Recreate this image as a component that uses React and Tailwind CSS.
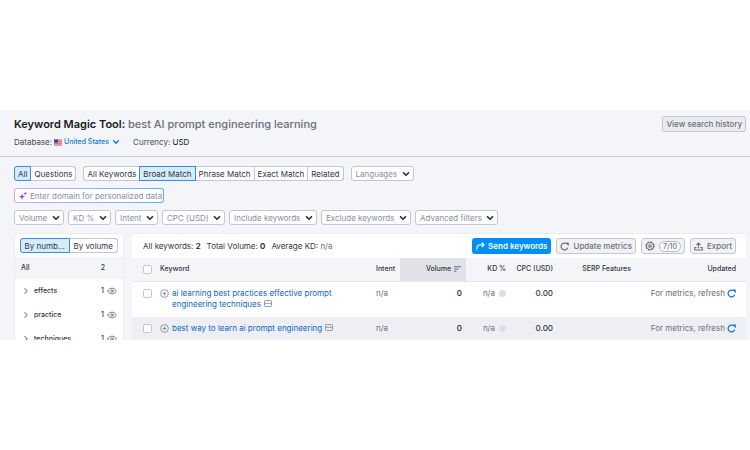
import React, { useState } from 'react';
import { ChevronDown, ChevronRight, Eye } from 'lucide-react';
import clsx from 'clsx';

const scopeTabs = ['All', 'Questions'];
const matchTabs = ['All Keywords', 'Broad Match', 'Phrase Match', 'Exact Match', 'Related'];
const filters = ['Volume', 'KD %', 'Intent', 'CPC (USD)', 'Include keywords', 'Exclude keywords', 'Advanced filters'];

const groups = [
  { name: 'effects', count: 1 },
  { name: 'practice', count: 1 },
  { name: 'techniques', count: 1 },
];

const keywords = [
  { id: 1, text: 'ai learning best practices effective prompt engineering techniques', intent: 'n/a', volume: 0, kd: 'n/a', cpc: '0.00' },
  { id: 2, text: 'best way to learn ai prompt engineering', intent: 'n/a', volume: 0, kd: 'n/a', cpc: '0.00' },
];

const RefreshIcon = ({ className }) => (
  <svg viewBox="0 0 16 16" className={className} fill="none" stroke="currentColor" strokeWidth="2.2" aria-hidden="true">
    <path d="M10.5 2.6A6 6 0 1 0 13.6 10" />
    <path d="M9 1h6.500v6.500z" fill="currentColor" stroke="none" />
  </svg>
);

const SendIcon = () => (
  <svg viewBox="0 0 18 16" className="w-[9px] h-2" fill="none" stroke="currentColor" strokeWidth="2.200" strokeLinecap="round" strokeLinejoin="round" aria-hidden="true">
    <path d="M1.5 14.5c0-6 2.5-9 8-9h6.5M12 1.5l4 4-4 4" />
  </svg>
);

const GearIcon = () => (
  <svg viewBox="0 0 20 20" className="w-[10px] h-[10px]" fill="none" stroke="currentColor" strokeWidth="2.2" aria-hidden="true">
    <circle cx="10" cy="10" r="7" />
    <circle cx="10" cy="10" r="2.6" />
    <circle cx="10" cy="10" r="8.6" strokeWidth="1.8" strokeDasharray="3.4 3.35" />
  </svg>
);

const ExportIcon = () => (
  <svg viewBox="0 0 18 18" className="w-[9px] h-[9px]" fill="none" stroke="currentColor" strokeWidth="2.2" strokeLinecap="round" strokeLinejoin="round" aria-hidden="true">
    <path d="M9 12V2M5.5 5.5L9 2l3.500 3.500M4.500 11H1.500v5h15v-5h-3" />
  </svg>
);

const SparkleIcon = () => (
  <svg viewBox="0 0 16 16" className="w-2 h-2 shrink-0" fill="#8f3df5" aria-hidden="true">
    <path d="M6 4.500c.5 3.200 1.300 4 4.800 4.800-3.500.8-4.300 1.600-4.800 5.200-.5-3.600-1.300-4.400-5-5.200 3.700-.8 4.500-1.600 5-4.800z" stroke="#8f3df5" />
    <path d="M12.500 0c.3 2 1 2.600 3 3-2 .4-2.700 1-3 3-.3-2-1-2.600-3-3 2-.4 2.700-1 3-3z" stroke="#8f3df5" strokeWidth=".6" />
  </svg>
);

const SortIcon = () => (
  <svg viewBox="0 0 14 12" className="w-[7px] h-[6px]" stroke="#6c6e79" strokeWidth="2" aria-hidden="true">
    <path d="M0 1.500h14M0 6h9M0 10.500h5" />
  </svg>
);

const SerpIcon = () => (
  <svg viewBox="0 0 16 14" className="inline w-2 h-[7px] ml-[3px] align-baseline" fill="none" stroke="#8a8e9b" strokeWidth="1.800" aria-hidden="true">
    <rect x="1" y="1" width="14" height="12" rx="1.500" />
    <path d="M1 6.500h14" />
  </svg>
);

const PlusCircleIcon = () => (
  <svg viewBox="0 0 18 18" className="w-[9px] h-[9px]" fill="none" stroke="#8a8e9b" strokeWidth="1.800" aria-hidden="true">
    <circle cx="9" cy="9" r="7.800" />
    <path d="M9 5v8M5 9h8" />
  </svg>
);

const FlagIcon = () => (
  <svg viewBox="0 0 16 12" className="w-2 h-[7px]" aria-hidden="true">
    <path d="M0 0h16v12H0z" fill="#f6d6da" />
    <path d="M0 1h16M0 4.300h16M0 7.600h16M0 11h16" stroke="#e2495b" strokeWidth="1.800" />
    <path d="M0 0h8v6.500H0z" fill="#3c4f9f" />
  </svg>
);

const Segments = ({ items, value, onChange, label, wide }) => (
  <div role="group" aria-label={label} className="flex h-[15px] rounded-[3px] bg-white border border-[#c4c7cf]">
    {items.map((item) => (
      <button
        key={item}
        type="button"
        aria-pressed={item === value}
        onClick={() => onChange(item)}
        className={clsx(
          '-my-px -mr-px px-[3px] border text-center whitespace-nowrap first:-ml-px first:rounded-l-[3px] last:rounded-r-[3px]',
          wide && 'flex-1',
          item === value ? 'relative bg-[#d4ecfb] border-[#3b8ce0]' : 'border-[#c4c7cf]'
        )}
      >
        {item}
      </button>
    ))}
  </div>
);

const FilterSelect = ({ label }) => (
  <div className="relative h-[15px]">
    <select
      aria-label={label}
      className="appearance-none block h-full pl-1 pr-[15px] bg-white border border-[#c4c7cf] rounded-[3px] text-[#8a8e9b]"
    >
      <option>{label}</option>
    </select>
    <ChevronDown size={10} strokeWidth={4} className="absolute right-[3px] top-[3px] text-[#2b2e38] pointer-events-none" />
  </div>
);

const ToolButton = ({ children, label }) => (
  <button
    type="button"
    aria-label={label}
    className="flex items-center gap-1 h-4 px-[3px] rounded-[3px] border border-[#c4c7cf] bg-[#f1f2f5] text-[#6c6e79] font-medium whitespace-nowrap"
  >
    {children}
  </button>
);

const Header = () => (
  <header className="border-b border-[#c9ccd6] pl-[14px] pr-1 pt-[6px] pb-2">
    <div className="flex items-center justify-between">
      <h1 className="text-[11px] leading-4 font-semibold text-[#191b23]">
        Keyword Magic Tool: <span className="font-medium text-[#6c6e79]">best AI prompt engineering learning</span>
      </h1>
      <button type="button" className="h-4 px-[3px] rounded-[3px] border border-[#c4c7cf] bg-[#e9ebf0] font-medium text-[#6c6e79]">
        View search history
      </button>
    </div>
    <div className="flex items-center mt-1 leading-3">
      <label htmlFor="database" className="mr-[2px] text-[#484a54]">Database:</label>
      <FlagIcon />
      <div className="relative ml-[2px]">
        <select id="database" className="appearance-none block pr-3 text-[7px] font-medium text-[#1275d1]">
          <option>United States</option>
        </select>
        <ChevronDown size={10} strokeWidth={3} className="absolute right-0 top-px text-[#1275d1] pointer-events-none" />
      </div>
      <p className="ml-3 text-[#484a54]">Currency: <span className="text-[#191b23]">USD</span></p>
    </div>
  </header>
);

const Sidebar = () => {
  const [mode, setMode] = useState('By numb...');

  return (
    <aside className="w-[110px] shrink-0 bg-white rounded-t-[4px] border border-[#eceef3]">
      <div className="px-[5px] pt-1 pb-1">
        <Segments items={['By numb...', 'By volume']} value={mode} onChange={setMode} label="Group by" wide />
      </div>
      <div className="flex justify-between h-[22px] items-center pl-[6px] pr-[18px] bg-[#f4f5f9] text-[7px] font-medium">
        <span>All</span>
        <span>2</span>
      </div>
      <ul>
        {groups.map((group) => (
          <li key={group.name} className="flex items-center h-6 pl-[6px] pr-[6px] text-[7px] font-medium">
            <ChevronRight size={10} strokeWidth={2.5} className="mr-[3px] text-[#6c6e79]" />
            <span className="flex-1">{group.name}</span>
            <span className="mr-[3px]">{group.count}</span>
            <Eye size={10} className="text-[#6c6e79]" />
          </li>
        ))}
      </ul>
    </aside>
  );
};

const KeywordTable = () => (
  <table className="w-full table-fixed border-collapse">
    <thead>
      <tr className="h-[23px] bg-[#f4f5f9] border-b border-[#e3e5ec] text-[7px] text-[#33353f]">
        <th className="w-7 pl-[11px] text-left">
          <input type="checkbox" aria-label="Select all keywords" className="block appearance-none w-[9px] h-[9px] bg-white border border-[#c4c7cf] rounded-[2px]" />
        </th>
        <th className="text-left font-medium">Keyword</th>
        <th className="w-[29px] pl-[5px] text-left font-medium">Intent</th>
        <th className="w-[66px] pr-[5px] bg-[#e0e1e9] font-medium">
          <span className="flex items-center justify-end gap-[3px]">Volume <SortIcon /></span>
        </th>
        <th className="w-10 text-right font-medium">KD %</th>
        <th className="w-[47px] text-right font-medium">CPC (USD)</th>
        <th className="w-[78px] text-right font-medium">SERP Features</th>
        <th className="w-[115px] pr-[10px] text-right font-medium">Updated</th>
      </tr>
    </thead>
    <tbody>
      {keywords.map((row) => (
        <tr key={row.id} className="align-top leading-[11px] text-[#6c6e79] even:bg-[#eeeff4]">
          <td className="pl-[11px] py-[7px]">
            <input type="checkbox" aria-label={`Select ${row.text}`} className="block appearance-none w-[9px] h-[9px] bg-white border border-[#c4c7cf] rounded-[2px]" />
          </td>
          <td className="pt-[6px] pb-[7px] pr-8">
            <div className="flex gap-[3px]">
              <button type="button" aria-label="Add to list" className="h-[11px] shrink-0">
                <PlusCircleIcon />
              </button>
              <p>
                <a href="#keyword" className="text-[#0f66c0]">{row.text}</a>
                <SerpIcon />
              </p>
            </div>
          </td>
          <td className="py-[6px] pl-[5px]">{row.intent}</td>
          <td className="py-[6px] pr-1 text-right font-medium text-[#191b23]">{row.volume}</td>
          <td className="py-[6px]">
            <span className="flex items-center justify-end gap-1">
              {row.kd}
              <span className="w-[7px] h-[7px] rounded-full bg-[#dddfe6]" />
            </span>
          </td>
          <td className="py-[6px] text-right font-medium text-[#33353f]">{row.cpc}</td>
          <td />
          <td className="py-[6px] pr-[10px]">
            <button type="button" className="flex items-center gap-[2px] ml-auto whitespace-nowrap">
              For metrics, refresh
              <RefreshIcon className="w-[9px] h-[9px] text-[#1275d1]" />
            </button>
          </td>
        </tr>
      ))}
    </tbody>
  </table>
);

export default function App() {
  const [scope, setScope] = useState('All');
  const [match, setMatch] = useState('Broad Match');

  return (
    <div className="h-screen py-[110px] bg-white">
      <main className="h-full overflow-hidden bg-[#f4f5f9] font-[Inter,sans-serif] text-[8px] leading-3 text-[#33353f]">
        <Header />

        <div className="pl-[14px] pr-1 pt-[9px]">
          <div className="flex flex-col items-start gap-[7px]">
            <div className="flex gap-[7px]">
              <Segments items={scopeTabs} value={scope} onChange={setScope} label="Scope" />
              <Segments items={matchTabs} value={match} onChange={setMatch} label="Match type" />
              <FilterSelect label="Languages" />
            </div>

            <div className="w-[150px] h-[15px] p-px rounded-[3px] bg-linear-to-r from-[#d0a8fb] to-[#57b1f7]">
              <label className="flex items-center gap-[3px] h-full pl-1 rounded-[2px] bg-white">
                <SparkleIcon />
                <input
                  type="text"
                  aria-label="Domain"
                  placeholder="Enter domain for personalized data"
                  className="flex-1 min-w-0 outline-none placeholder:text-[#8a8e9b]"
                />
              </label>
            </div>

            <div className="flex gap-1">
              {filters.map((filter) => (
                <FilterSelect key={filter} label={filter} />
              ))}
            </div>
          </div>

          <div className="flex gap-2 mt-2">
            <Sidebar />
            <section className="flex-1 min-w-0 bg-white rounded-t-[4px] border-t border-[#eceef3]">
              <div className="flex items-center justify-between h-6 pl-[11px] pr-[10px]">
                <div className="flex gap-[6px]">
                  <p>All keywords: <b className="font-semibold text-[#191b23]">2</b></p>
                  <p>Total Volume: <b className="font-semibold text-[#191b23]">0</b></p>
                  <p>Average KD: <span className="text-[#6c6e79]">n/a</span></p>
                </div>
                <div className="flex gap-[5px]">
                  <button type="button" className="flex items-center gap-[3px] h-4 px-1 rounded-[3px] bg-[#008ff8] text-white font-semibold whitespace-nowrap">
                    <SendIcon />
                    Send keywords
                  </button>
                  <ToolButton>
                    <RefreshIcon className="w-[9px] h-[9px]" />
                    Update metrics
                  </ToolButton>
                  <ToolButton label="Manage columns">
                    <GearIcon />
                    <span className="px-[3px] border border-[#b5b8c2] rounded-full bg-white text-[7px] leading-[9px]">7/10</span>
                  </ToolButton>
                  <ToolButton>
                    <ExportIcon />
                    Export
                  </ToolButton>
                </div>
              </div>
              <KeywordTable />
            </section>
          </div>
        </div>
      </main>
    </div>
  );
}
